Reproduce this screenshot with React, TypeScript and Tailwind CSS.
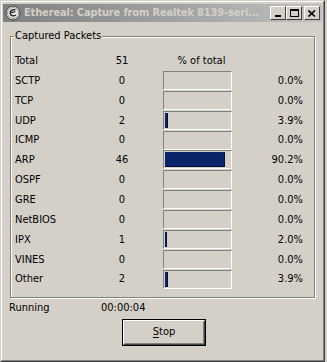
import React from "react";

const rows: { name: string; count: number; pct: number; h: string }[] = [
  { name: "SCTP", count: 0, pct: 0, h: "h-[20px]" },
  { name: "TCP", count: 0, pct: 0, h: "h-[20px]" },
  { name: "UDP", count: 2, pct: 3.9, h: "h-[20px]" },
  { name: "ICMP", count: 0, pct: 0, h: "h-[19px]" },
  { name: "ARP", count: 46, pct: 90.2, h: "h-[20px]" },
  { name: "OSPF", count: 0, pct: 0, h: "h-[20px]" },
  { name: "GRE", count: 0, pct: 0, h: "h-[20px]" },
  { name: "NetBIOS", count: 0, pct: 0, h: "h-[20px]" },
  { name: "IPX", count: 1, pct: 2.0, h: "h-[20px]" },
  { name: "VINES", count: 0, pct: 0, h: "h-[20px]" },
  { name: "Other", count: 2, pct: 3.9, h: "h-[19px]" },
];

function Bar({ pct }: { pct: number }) {
  const inner = 67;
  const w = pct > 0 ? Math.max(2, Math.round((inner * pct) / 100)) : 0;
  return (
    <div className="w-[69px] h-[19px] border border-t-[#808080] border-l-[#808080] border-r-white border-b-white bg-[#d4d0c8] flex items-center">
      {w > 0 && (
        <div
          className="h-[15px] ml-[1px] bg-[#0a246a] border-r border-b border-[#06113a]"
          style={{ width: w }}
        />
      )}
    </div>
  );
}

function TitleBtn({ children, className = "" }: { children: React.ReactNode; className?: string }) {
  return (
    <div
      className={
        "w-[16px] h-[14px] bg-[#d4d0c8] border border-t-white border-l-white border-r-[#404040] border-b-[#404040] flex items-center justify-center " +
        className
      }
    >
      {children}
    </div>
  );
}

export default function App() {
  return (
    <div
      className="w-[327px] h-[362px] bg-[#d4d0c8] text-[11px] text-black"
      style={{ fontFamily: '"DejaVu Sans Condensed", "DejaVu Sans", sans-serif' }}
    >
      <div className="w-[325px] h-[362px] border border-t-[#d4d0c8] border-l-[#d4d0c8] border-r-[#404040] border-b-[#404040]">
        <div className="w-full h-full border border-t-white border-l-white border-r-[#808080] border-b-[#808080] p-[1px] flex flex-col">
          {/* Title bar */}
          <div className="h-[18px] mt-[1px] bg-gradient-to-r from-[#808080] to-[#c0c0c0] flex items-center pl-[2px] pr-[2px]">
            <svg width="16" height="16" viewBox="0 0 16 16" className="shrink-0">
              <circle cx="8" cy="8" r="7" fill="#e8e8e8" stroke="#404040" strokeWidth="1" />
              <circle cx="8" cy="8" r="5.5" fill="none" stroke="#9a9a9a" strokeWidth="1" />
              <path d="M10.5 5.2 C8 3.8 4.8 5.4 5.2 8.4 C5.6 11 8.8 11.6 10.8 10" fill="none" stroke="#202020" strokeWidth="1.4" />
              <path d="M6 7.6 L10.2 6.6" fill="none" stroke="#202020" strokeWidth="1.2" />
            </svg>
            <span className="ml-[3px] font-bold text-[#d4d0c8] whitespace-nowrap tracking-[-0.15px] text-[11px]">
              Ethereal: Capture from Realtek 8139-seri...
            </span>
            <div className="ml-auto flex items-center">
              <TitleBtn>
                <div className="w-[6px] h-[2px] bg-black mt-[6px] mr-[1px]" />
              </TitleBtn>
              <TitleBtn>
                <div className="w-[9px] h-[8px] border border-black border-t-2" />
              </TitleBtn>
              <TitleBtn className="ml-[2px]">
                <svg width="8" height="7" viewBox="0 0 8 7">
                  <path d="M0.5 0.5 L7 6.5 M7 0.5 L0.5 6.5" stroke="black" strokeWidth="1.6" />
                </svg>
              </TitleBtn>
            </div>
          </div>

          {/* Body */}
          <div className="flex-1 flex flex-col px-[4px]">
            {/* Group box */}
            <div className="relative mt-[14px] ml-[3px] w-[305px] h-[262px] border border-[#808080] shadow-[inset_1px_1px_0_#ffffff,1px_1px_0_#ffffff]">
              <span className="absolute -top-[8px] left-[3px] px-[1px] bg-[#d4d0c8] leading-[14px]">
                Captured Packets
              </span>
              <div className="flex flex-col pt-[14px] pl-[4px]">
                <div className="flex items-center h-[20px]">
                  <div className="w-[81px]">Total</div>
                  <div className="w-[52px] text-center">51</div>
                  <div className="w-[19px]" />
                  <div className="w-[69px] text-center">% of total</div>
                </div>
                {rows.map((r) => (
                  <div key={r.name} className={"flex items-center " + r.h}>
                    <div className="w-[81px]">{r.name}</div>
                    <div className="w-[52px] text-center">{r.count}</div>
                    <div className="w-[15px]" />
                    <div className="self-start">
                      <Bar pct={r.pct} />
                    </div>
                    <div className="w-[71px] text-right">{r.pct.toFixed(1)}%</div>
                  </div>
                ))}
              </div>
            </div>

            {/* Running */}
            <div className="flex items-center mt-[3px] h-[14px] pl-[2px]">
              <div className="w-[92px]">Running</div>
              <div>00:00:04</div>
            </div>

            {/* Stop button */}
            <div className="flex justify-center mt-[4px] pl-[3px]">
              <div className="w-[84px] h-[27px] border border-black">
                <div className="w-full h-full border border-t-white border-l-white border-r-[#404040] border-b-[#404040]">
                  <div className="w-full h-full border border-t-[#d4d0c8] border-l-[#d4d0c8] border-r-[#808080] border-b-[#808080] flex items-center justify-center">
                    <span>
                      <span className="underline underline-offset-[2px]">S</span>top
                    </span>
                  </div>
                </div>
              </div>
            </div>
          </div>
        </div>
      </div>
    </div>
  );
}
